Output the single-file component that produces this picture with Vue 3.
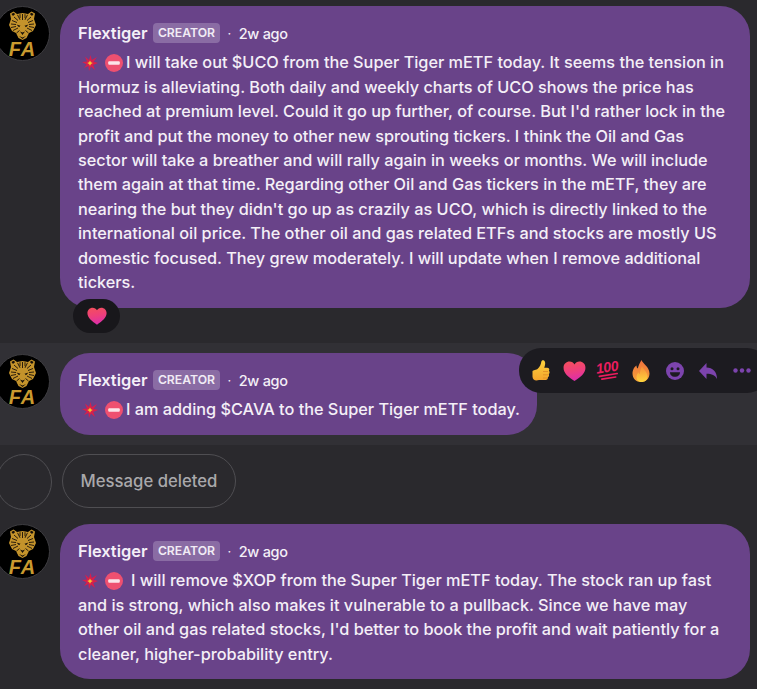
<script setup>
const name = 'Flextiger'
const first = [
  "I will take out $UCO from the Super Tiger mETF today. It seems the tension in",
  "Hormuz is alleviating. Both daily and weekly charts of UCO shows the price has",
  "reached at premium level. Could it go up further, of course. But I'd rather lock in the",
  "profit and put the money to other new sprouting tickers. I think the Oil and Gas",
  "sector will take a breather and will rally again in weeks or months. We will include",
  "them again at that time. Regarding other Oil and Gas tickers in the mETF, they are",
  "nearing the but they didn't go up as crazily as UCO, which is directly linked to the",
  "international oil price. The other oil and gas related ETFs and stocks are mostly US",
  "domestic focused. They grew moderately. I will update when I remove additional",
  "tickers.",
]
const second = ["I am adding $CAVA to the Super Tiger mETF today."]
const third = [
  "I will remove $XOP from the Super Tiger mETF today. The stock ran up fast",
  "and is strong, which also makes it vulnerable to a pullback. Since we have may",
  "other oil and gas related stocks, I'd better to book the profit and wait patiently for a",
  "cleaner, higher-probability entry.",
]
const rows = [
  { id: 'first', lines: first },
  { id: 'hover', lines: second },
  { id: 'deleted' },
  { id: 'last', lines: third },
]
</script>

<template>
  <div class="page">
    <svg width="0" height="0" class="defs">
      <defs>
        <linearGradient id="hg" x1="0" y1="0" x2="0.2" y2="1"><stop offset="0" stop-color="#f4505a"/><stop offset="0.55" stop-color="#ee3f7c"/><stop offset="1" stop-color="#dd2fa8"/></linearGradient>
        <linearGradient id="th" x1="0" y1="0" x2="0" y2="1"><stop offset="0" stop-color="#fbd13d"/><stop offset="1" stop-color="#f5a52c"/></linearGradient>
        <linearGradient id="fl" x1="0" y1="0" x2="0" y2="1"><stop offset="0" stop-color="#f0703c"/><stop offset="1" stop-color="#f4a53a"/></linearGradient>
        <linearGradient id="fi" x1="0" y1="0" x2="0" y2="1"><stop offset="0" stop-color="#f78d38"/><stop offset="1" stop-color="#fdd53d"/></linearGradient>
        <symbol id="hrt" viewBox="0 0 24 21"><path d="M12 21C5.500 16.500.5 12.800.5 7 .5 3 3.500.5 6.800.5 9 .5 11 1.700 12 3.600 13 1.700 15 .5 17.200.5 20.500.5 23.500 3 23.500 7c0 5.800-5 9.500-11.500 14z" fill="url(#hg)"/></symbol>
        <symbol id="burst" viewBox="0 0 16 16"><path d="M8.500 0 9.800 5 15 2l-3.400 4.800L16 8l-4.800 2L13 15 9 11.500 7 16l-.6-5L2 13l2.600-3.600L0 7l5-.6L3 1.500 7 5z" fill="#d81f4c"/><path d="M8 5.500 9 7.200l1.800.8L9 9l-1 1.700L7 9l-1.800-1L7 7.200z" fill="#f7c52f"/></symbol>
        <symbol id="stop" viewBox="0 0 18 18"><circle cx="9" cy="9" r="9" fill="#ee5070"/><rect x="3.200" y="7.200" width="11.600" height="3.600" rx="1" fill="#fbe4e9"/></symbol>
        <symbol id="tg" viewBox="0 0 27 29">
          <path d="M1 2.500 4.500.5 8 3l5.500-1L19 3 22.500.5 26 2.500 25 8l2 6-3 6-4 2-2.500 5-4 2-4-2L7 22l-4-2-3-6 2-6z" fill="#c4932b"/>
          <path d="M13.500 3v6M11 3.200v4M16 3.200v4M8.500 3.800l2.500 5M18.500 3.800 16 8.800M5 6l4 3.500M22 6l-4 3.500M3 9.500l5 2M24 9.500l-5 2M2 13l5 .5M25 13l-5 .5M2 16.500l5-1M25 16.500l-5-1M4 19.500l5-2.500M23 19.500 18 17M7.500 22l3-2.500M19.500 22l-3-2.500" stroke="#17100a" stroke-width=".9" fill="none"/>
          <path d="M2.400 2.900 4.500 1.700l1.700 1.400L4 5zM24.600 2.900 22.500 1.700l-1.700 1.400L23 5z" fill="#17100a"/>
          <path d="M7.500 13.500l4 1.200-1.500 1.500zM19.500 13.500l-4 1.200 1.500 1.500z" fill="#17100a"/>
          <path d="M11 20.500l2.500 1 2.500-1-2.500 3.500zM10 25l3.500 1.500L17 25l-3.500 3z" fill="#17100a"/>
        </symbol>
      </defs>
    </svg>

    <section v-for="row in rows" :key="row.id" class="row" :class="row.id">
      <template v-if="row.lines">
        <div class="avatar">
          <svg class="tiger"><use href="#tg" /></svg>
          <span class="fa">FA</span>
        </div>
        <div class="bubble">
          <header class="meta">
            <b>{{ name }}</b>
            <span class="badge">CREATOR</span>
            <span class="dot">·</span>
            <span class="time">2w ago</span>
          </header>
          <p class="text">
            <span class="emo"><svg class="burst"><use href="#burst" /></svg><svg class="stop"><use href="#stop" /></svg></span><template v-for="(l, i) in row.lines" :key="i">{{ l }}<br /></template>
          </p>
        </div>
      </template>
      <template v-else>
        <div class="ghost"></div>
        <div class="deleted-pill">Message deleted</div>
      </template>

      <div v-if="row.id === 'first'" class="reaction"><svg class="heart"><use href="#hrt" /></svg></div>

      <div v-if="row.id === 'hover'" class="toolbar">
        <span class="cell"><svg viewBox="0 0 18 22" width="18" height="22"><path d="M5.500 9C8 7 9 4 9.300 1.800 9.500.3 10.800-.2 12 .5c1.200.8 1.400 2.600 1 4.500-.2 1-.5 2-.8 2.800h3c2 0 2.600 1.800 1.700 3 1 .9.900 2.600-.2 3.300.7 1 .3 2.600-.9 3.100.4 1.200-.4 2.800-2 2.800H7c-3 1-6.500.5-6.500-3.500v-5C.5 10 3 10.500 5.500 9z" fill="url(#th)"/><path d="M11 11.500h5M11 14.800h5M11 18h4" stroke="#e08f25" stroke-width=".9"/></svg></span>
        <span class="cell"><svg width="23" height="20"><use href="#hrt" /></svg></span>
        <span class="cell"><svg viewBox="0 0 29 25" width="29" height="25"><g transform="rotate(-9 14.500 12)"><text x="14.500" y="14" text-anchor="middle" class="hundred">100</text><path d="M5.500 17h18M7.500 20.200h14" stroke="#ec1d5e" stroke-width="1.700" stroke-linecap="round"/></g></svg></span>
        <span class="cell"><svg viewBox="0 0 18 22" width="18" height="22"><path d="M9.500 0c.8 3.500 8 6.500 8 13.500 0 5-3.800 8.500-8.500 8.500S.500 18.500.5 13.500C.5 10 2.500 6.500 4.500 5.500 4.500 7 5 8 5.800 8.500 6.500 5.500 8 2.500 9.500 0z" fill="url(#fl)"/><path d="M10 6c.5 3 5.500 5.500 5.500 10.500 0 3.300-2.700 5.500-6 5.500-2.800 0-5-2-5-5 0-2 .9-3.600 2.200-4.800.1 1 .4 1.700 1 2C8 11.500 8.800 8.500 10 6z" fill="url(#fi)"/></svg></span>
        <span class="cell"><svg viewBox="0 0 18 18" width="18" height="18"><circle cx="9" cy="9" r="9" fill="#7c44ad"/><circle cx="6" cy="6.800" r="1.500" fill="#1c1b20"/><circle cx="12" cy="6.800" r="1.500" fill="#1c1b20"/><path d="M4 10.200h10c0 2.800-2.200 4.600-5 4.600s-5-1.800-5-4.600z" fill="#1c1b20"/></svg></span>
        <span class="cell"><svg viewBox="0 0 18 16" width="18" height="16"><path d="M7.500 0v4.500c6 .2 10.500 4 10.500 11.500-1.800-3.800-5.200-5.300-10.500-5.300V16L0 8z" fill="#7c44ad"/></svg></span>
        <span class="cell"><svg viewBox="0 0 18 5" width="18" height="5"><circle cx="2.500" cy="2.500" r="2.200" fill="#7c44ad"/><circle cx="9" cy="2.500" r="2.200" fill="#7c44ad"/><circle cx="15.500" cy="2.500" r="2.200" fill="#7c44ad"/></svg></span>
      </div>
    </section>
  </div>
</template>

<style scoped>
.page { width: 757px; height: 689px; overflow: hidden; background: #2a292d; font-family: Inter, "Liberation Sans", sans-serif; color: #f4eff7; position: relative; }
.defs { position: absolute; }
.row { position: relative; display: flex; align-items: flex-start; padding-left: 60px; box-sizing: border-box; }
.first { height: 343px; padding-top: 6px; }
.hover { height: 102px; padding-top: 10px; background: #313035; }
.deleted { height: 79px; padding: 9px 0 0 0; }
.avatar { position: absolute; left: -5px; top: 6px; width: 55px; height: 55px; border-radius: 50%; background: #000; box-sizing: border-box; border: 1px solid #3d3c40; overflow: hidden; display: flex; flex-direction: column; align-items: center; }
.hover .avatar { top: 11px; }
.last .avatar { top: 0; }
.tiger { width: 27px; height: 29px; margin-top: 4px; flex: none; }
.fa { font: italic 700 20px/15px "Liberation Sans", sans-serif; color: #c99a2f; letter-spacing: 1px; margin-top: 2px; }
.bubble { background: #694389; border-radius: 30px; padding: 15px 18px 13px; box-sizing: border-box; }
.first .bubble { width: 690px; height: 302px; }
.hover .bubble { width: 477px; height: 82px; }
.last .bubble { width: 690px; height: 155px; }
.meta { display: flex; align-items: center; height: 24px; white-space: nowrap; }
.meta b { font-weight: 600; font-size: 16.4px; }
.badge { margin-left: 5.5px; background: #8a6ca4; color: #f1ecf5; font-size: 12.2px; font-weight: 600; border-radius: 4px; height: 20px; line-height: 20px; padding: 0 5px; }
.dot { margin: 0 7.500px; font-size: 13px; }
.time { font-size: 14.5px; font-weight: 500; letter-spacing: -.3px; }
.text { margin: 5.200px 0 0; font-size: 16.28px; font-weight: 500; line-height: 24.45px; white-space: nowrap; }
.emo { display: inline-flex; align-items: center; gap: 7px; margin: 0 3px 0 4px; vertical-align: -3px; }
.last .emo { margin-right: 8px; }
.burst { width: 16px; height: 16px; }
.stop { width: 18px; height: 18px; }
.reaction { position: absolute; left: 73px; top: 299px; width: 47px; height: 34px; background: #18171b; border-radius: 17px; display: flex; align-items: center; justify-content: center; }
.heart { width: 20px; height: 18px; }
.hundred { font: italic 700 14px "Liberation Sans", sans-serif; fill: #ec1d5e; letter-spacing: -.3px; }
.toolbar { position: absolute; left: 519px; top: 5px; width: 250px; height: 45px; background: #1c1b20; border-radius: 22px; display: flex; align-items: center; padding-left: 5px; box-sizing: border-box; }
.cell { width: 33.5px; flex: none; display: flex; justify-content: center; align-items: center; }
.ghost { width: 56px; height: 56px; margin-left: -4px; flex: none; border: 1px solid #4f4e52; border-radius: 50%; box-sizing: border-box; }
.deleted-pill { width: 174px; height: 54px; margin-left: 10px; border: 1px solid #4f4e52; border-radius: 27px; display: flex; align-items: center; justify-content: center; color: #a9a8ab; font-size: 16.7px; font-weight: 500; box-sizing: border-box; }
</style>
